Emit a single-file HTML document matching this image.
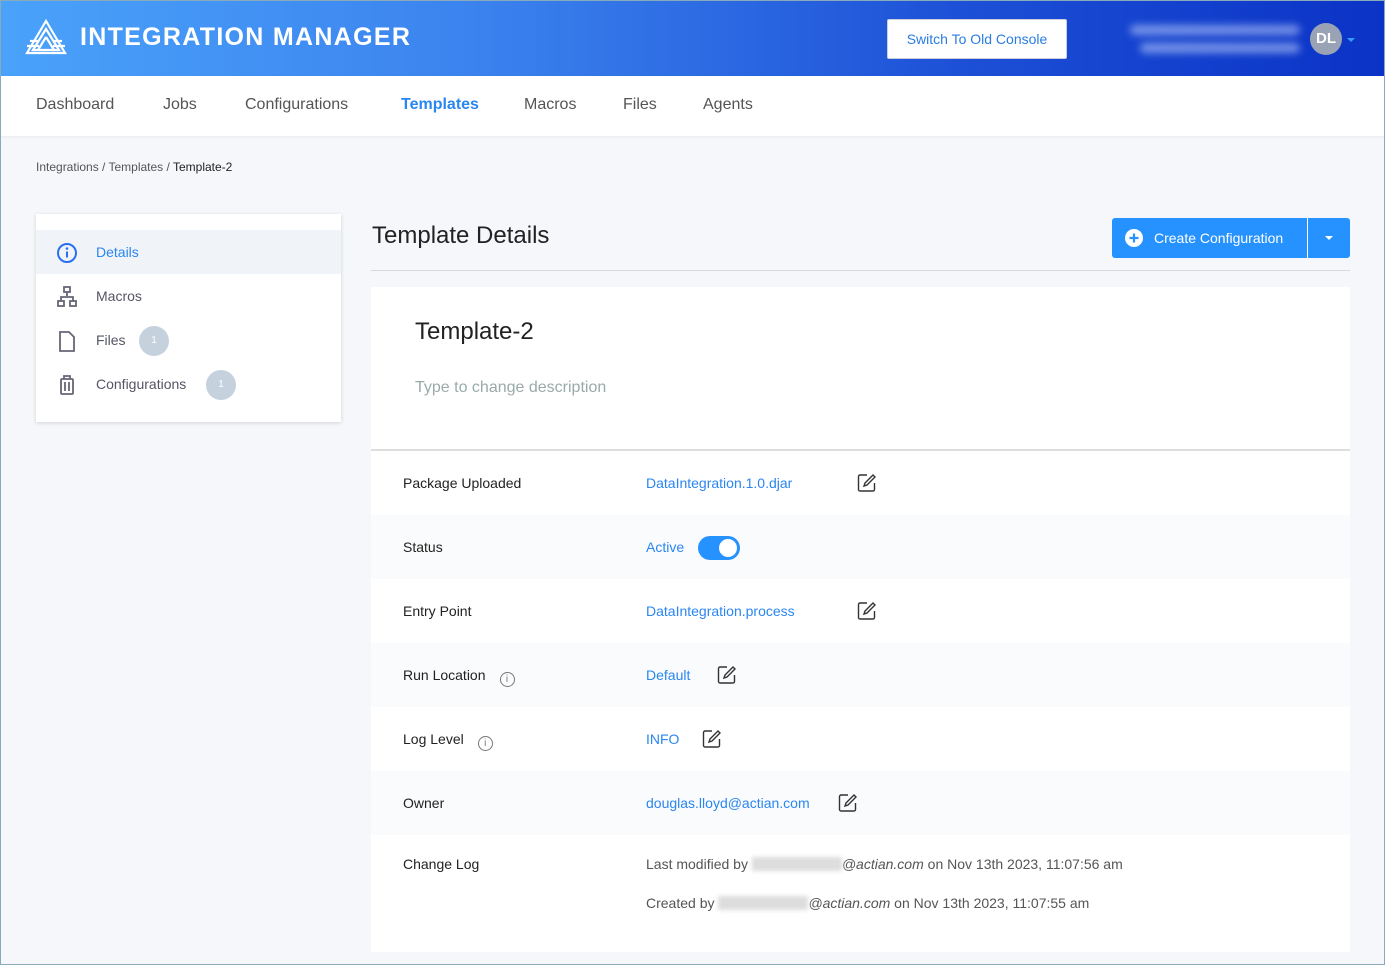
<!DOCTYPE html>
<html><head><meta charset="utf-8"><style>
*{box-sizing:border-box;margin:0;padding:0}
body{width:1385px;height:965px;overflow:hidden;background:#f5f7fa;font-family:"Liberation Sans",sans-serif;color:#222;position:relative;}
.frame{position:absolute;left:0;top:0;width:1385px;height:965px;border:1px solid #8ab;pointer-events:none;z-index:9}
.hdr{position:absolute;left:0;top:0;width:1385px;height:76px;background:linear-gradient(90deg,#4aa2fa 0%,#3b82ee 35%,#1c4fd6 70%,#0b33c6 100%)}
.logo{position:absolute;left:80px;top:23px;color:#fff;font-size:25px;font-weight:bold;letter-spacing:1.3px}
.btn-old{position:absolute;left:887px;top:19px;width:180px;height:40px;background:#fff;border:1px solid #ccd;border-radius:2px;color:#2a7de1;font-size:14px;text-align:center;line-height:38px}
.blur{position:absolute;height:10px;background:rgba(200,215,255,.55);filter:blur(4px);border-radius:5px}
.av{position:absolute;left:1310px;top:23px;width:32px;height:32px;border-radius:50%;background:#9aa3b5;color:#fff;font-weight:bold;font-size:15px;text-align:center;line-height:32px}
.nav{position:absolute;left:0;top:76px;width:1385px;height:60px;background:#fff;box-shadow:0 1px 3px rgba(0,0,0,.06)}
.nav span{position:absolute;top:20px;font-size:16px;color:#555;}
.bc{position:absolute;left:36px;top:160px;font-size:12px;color:#555}
.side{position:absolute;left:36px;top:214px;width:305px;height:208px;background:#fff;box-shadow:0 1px 4px rgba(0,0,0,.15)}
.si{position:absolute;left:0;width:305px;height:44px;font-size:14px;color:#556}
.si .t{position:absolute;left:60px;top:14px}
.si svg{position:absolute;left:20px;top:12px}
.badge{position:absolute;top:8px;width:30px;height:30px;border-radius:50%;background:#c5d2de;color:#fff;font-size:10px;text-align:center;line-height:30px}
h1{position:absolute;left:372px;top:222px;font-size:24px;font-weight:normal;color:#222}
.line{position:absolute;left:371px;top:270px;width:979px;height:1px;background:#d8d8d8}
.cbtn{position:absolute;left:1112px;top:218px;width:238px;height:40px;background:#2692ff;border-radius:3px;color:#fff;font-size:14px}
.card{position:absolute;left:371px;top:287px;width:979px;height:665px;background:#fff}
.row{position:absolute;left:0;width:979px;height:64px}
.row.g{background:#fafbfc}
.lbl{position:absolute;left:32px;top:24px;font-size:14px;color:#222}
.val{position:absolute;left:275px;top:24px;font-size:14px;color:#2a86f0}
.ed{position:absolute;top:22px}
.info{display:inline-block;width:15px;height:15px;border:1px solid #777;border-radius:50%;font-size:10px;text-align:center;line-height:13px;color:#777;margin-left:14px;vertical-align:-2px}
</style></head><body>
<div class="frame"></div>
<div class="hdr">
<svg style="position:absolute;left:25px;top:19px" width="42" height="36" viewBox="0 0 42 36" fill="none" stroke="#fff" stroke-width="2.2"><path d="M21 2 L2 34 H40 Z"/><path d="M21 10 L8 31 H34Z"/><path d="M21 18 L13 31"/><path d="M21 18 L29 31"/><path d="M2 27 H14 M28 27 H40 M5 22 H14 M28 22H37"/></svg>
<div class="logo">INTEGRATION MANAGER</div>
<div class="btn-old">Switch To Old Console</div>
<div class="blur" style="left:1130px;top:25px;width:170px"></div>
<div class="blur" style="left:1140px;top:43px;width:160px"></div>
<div class="av">DL</div>
<div style="position:absolute;left:1347px;top:38px;border:4px solid transparent;border-top-color:#3a9cff"></div>
</div>
<div class="nav">
<span style="left:36px">Dashboard</span><span style="left:163px">Jobs</span><span style="left:245px">Configurations</span><span style="left:401px;color:#2a86f0;font-weight:bold">Templates</span><span style="left:524px">Macros</span><span style="left:623px">Files</span><span style="left:703px">Agents</span>
</div>
<div class="bc">Integrations / Templates / <span style="color:#222">Template-2</span></div>
<div class="side">
<div class="si" style="top:16px;background:#f0f4f9;color:#2a86f0"><svg width="22" height="22" viewBox="0 0 22 22"><circle cx="11" cy="11" r="9" fill="none" stroke="#2a6ff0" stroke-width="2"/><circle cx="11" cy="6.5" r="1.3" fill="#2a6ff0"/><path d="M11 9.5v6" stroke="#2a6ff0" stroke-width="2"/></svg><span class="t">Details</span></div>
<div class="si" style="top:60px"><svg width="22" height="22" viewBox="0 0 22 22" fill="none" stroke="#667" stroke-width="1.8"><rect x="8" y="1" width="6" height="5"/><rect x="2" y="15" width="6" height="5"/><rect x="14" y="15" width="6" height="5"/><path d="M11 6v4M5 15v-4h12v4"/></svg><span class="t">Macros</span></div>
<div class="si" style="top:104px"><svg width="22" height="22" viewBox="0 0 22 22" fill="none" stroke="#667" stroke-width="1.8"><path d="M4 2h9l5 5v14H4z"/></svg><span class="t">Files</span><div class="badge" style="left:103px">1</div></div>
<div class="si" style="top:148px"><svg width="22" height="22" viewBox="0 0 22 22" fill="none" stroke="#667" stroke-width="1.8"><rect x="5" y="5" width="12" height="15" rx="1"/><path d="M8 5V2h6v3M9 8v9M13 8v9"/></svg><span class="t">Configurations</span><div class="badge" style="left:170px">1</div></div>
</div>
<h1>Template Details</h1>
<div class="line"></div>
<div class="cbtn"><svg style="position:absolute;left:13px;top:11px" width="18" height="18"><circle cx="9" cy="9" r="9" fill="#fff"/><path d="M9 4.5v9M4.5 9h9" stroke="#2692ff" stroke-width="2.2"/></svg><span style="position:absolute;left:42px;top:12px">Create Configuration</span><div style="position:absolute;left:195px;top:0;width:1px;height:40px;background:#fff"></div><div style="position:absolute;left:213px;top:18px;border:4px solid transparent;border-top-color:#fff"></div></div>
<div class="card">
<div style="position:absolute;left:44px;top:31px;font-size:24px">Template-2</div>
<div style="position:absolute;left:44px;top:92px;font-size:16px;color:#9aa">Type to change description</div>
<div style="position:absolute;left:0;top:162px;width:979px;height:2px;background:#ddd"></div>
<div class="row" style="top:164px"><span class="lbl">Package Uploaded</span><span class="val">DataIntegration.1.0.djar</span><svg class="ed" style="left:486px" width="20" height="20" viewBox="0 0 20 20" fill="none" stroke="#333" stroke-width="1.4"><path d="M10 2H3a1.5 1.5 0 0 0-1.5 1.5v13A1.5 1.5 0 0 0 3 18h13a1.5 1.5 0 0 0 1.5-1.5V10"/><path d="M16 2l2 2-8 8-3 1 1-3z"/></svg></div>
<div class="row g" style="top:228px"><span class="lbl">Status</span><span class="val">Active</span><div style="position:absolute;left:327px;top:21px;width:42px;height:24px;border-radius:12px;background:#2692ff"><div style="position:absolute;right:3px;top:3px;width:18px;height:18px;border-radius:50%;background:#fff"></div></div></div>
<div class="row" style="top:292px"><span class="lbl">Entry Point</span><span class="val">DataIntegration.process</span><svg class="ed" style="left:486px" width="20" height="20" viewBox="0 0 20 20" fill="none" stroke="#333" stroke-width="1.4"><path d="M10 2H3a1.5 1.5 0 0 0-1.5 1.5v13A1.5 1.5 0 0 0 3 18h13a1.5 1.5 0 0 0 1.5-1.5V10"/><path d="M16 2l2 2-8 8-3 1 1-3z"/></svg></div>
<div class="row g" style="top:356px"><span class="lbl">Run Location<span class="info">i</span></span><span class="val">Default</span><svg class="ed" style="left:346px" width="20" height="20" viewBox="0 0 20 20" fill="none" stroke="#333" stroke-width="1.4"><path d="M10 2H3a1.5 1.5 0 0 0-1.5 1.5v13A1.5 1.5 0 0 0 3 18h13a1.5 1.5 0 0 0 1.5-1.5V10"/><path d="M16 2l2 2-8 8-3 1 1-3z"/></svg></div>
<div class="row" style="top:420px"><span class="lbl">Log Level<span class="info">i</span></span><span class="val">INFO</span><svg class="ed" style="left:331px" width="20" height="20" viewBox="0 0 20 20" fill="none" stroke="#333" stroke-width="1.4"><path d="M10 2H3a1.5 1.5 0 0 0-1.5 1.5v13A1.5 1.5 0 0 0 3 18h13a1.5 1.5 0 0 0 1.5-1.5V10"/><path d="M16 2l2 2-8 8-3 1 1-3z"/></svg></div>
<div class="row g" style="top:484px"><span class="lbl">Owner</span><span class="val">douglas.lloyd@actian.com</span><svg class="ed" style="left:467px" width="20" height="20" viewBox="0 0 20 20" fill="none" stroke="#333" stroke-width="1.4"><path d="M10 2H3a1.5 1.5 0 0 0-1.5 1.5v13A1.5 1.5 0 0 0 3 18h13a1.5 1.5 0 0 0 1.5-1.5V10"/><path d="M16 2l2 2-8 8-3 1 1-3z"/></svg></div>
<div class="row" style="top:548px;height:117px"><span class="lbl" style="top:21px">Change Log</span>
<div style="position:absolute;left:275px;top:21px;font-size:14px;color:#555">Last modified by <span style="display:inline-block;width:90px;height:14px;background:#ddd;filter:blur(2px);vertical-align:-2px"></span><i>@actian.com</i> on Nov 13th 2023, 11:07:56 am</div>
<div style="position:absolute;left:275px;top:60px;font-size:14px;color:#555">Created by <span style="display:inline-block;width:90px;height:14px;background:#ddd;filter:blur(2px);vertical-align:-2px"></span><i>@actian.com</i> on Nov 13th 2023, 11:07:55 am</div>
</div>
</div>
</body></html>
